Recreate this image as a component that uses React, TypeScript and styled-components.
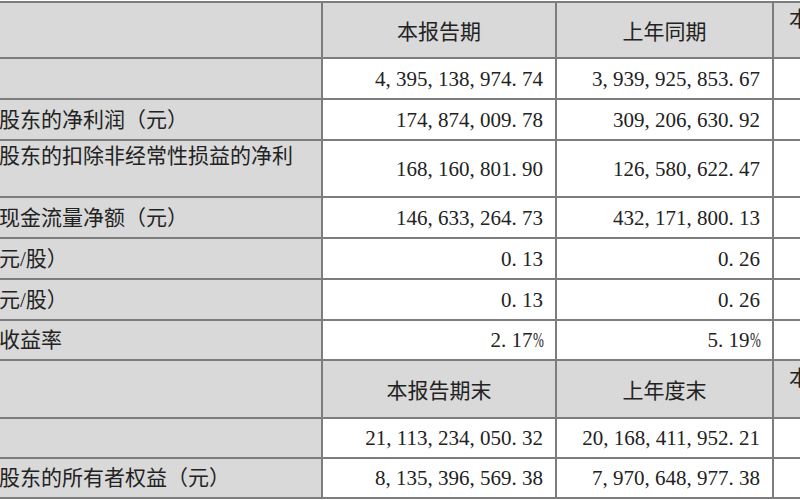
import { createGlobalStyle } from 'styled-components';
import styled from 'styled-components';

const GlobalStyle = createGlobalStyle`
  html, body {
    margin: 0;
    padding: 0;
    background: #ffffff;
    overflow: hidden;
  }
  body {
    font-family: "Liberation Serif", "Noto Sans CJK SC", serif;
    color: #222222;
  }
`;

const Page = styled.div`
  width: 800px;
  height: 500px;
  overflow: hidden;
  padding-top: 1px;
  box-sizing: border-box;
`;

const Table = styled.div<{ $rows: string }>`
  display: grid;
  grid-template-columns: 479px 232px 215px 198px;
  grid-template-rows: ${(p) => p.$rows};
  gap: 2px;
  padding: 2px 0;
  margin-left: -158px;
  width: max-content;
  background: #7d7d7d;
`;

const Cell = styled.div<{ $gray?: boolean; $align: 'left' | 'center' | 'right' }>`
  display: flex;
  align-items: center;
  justify-content: ${(p) =>
    p.$align === 'left' ? 'flex-start' : p.$align === 'right' ? 'flex-end' : 'center'};
  text-align: ${(p) => p.$align};
  background: ${(p) => (p.$gray ? '#d9d9d9' : '#ffffff')};
  font-size: 21px;
  line-height: 26px;
  overflow: hidden;
`;

const Label = styled(Cell)`
  padding: 0 22px 0 10px;
`;

const Head = styled(Cell)`
  padding: 4px 8px 0;
`;

const Num = styled(Cell)`
  padding: 0 12px 0 8px;
  white-space: nowrap;
`;

const Punct = styled.span`
  display: inline-block;
  width: 0.5em;
  text-align: left;
`;

const Percent = styled.span`
  display: inline-block;
  width: 0.5em;
  transform: scaleX(0.62);
  transform-origin: left center;
`;

type Row = {
  h: number;
  head?: boolean;
  label: string;
  cur: string;
  prev: string;
  change?: string;
};

const rows: Row[] = [
  { h: 54, head: true, label: '', cur: '本报告期', prev: '上年同期', change: '本报告期比上年同期增减' },
  { h: 39, label: '营业收入（元）', cur: '4,395,138,974.74', prev: '3,939,925,853.67' },
  { h: 39, label: '归属于上市公司股东的净利润（元）', cur: '174,874,009.78', prev: '309,206,630.92' },
  {
    h: 55,
    label: '归属于上市公司股东的扣除非经常性损益的净利润（元）',
    cur: '168,160,801.90',
    prev: '126,580,622.47',
  },
  { h: 39, label: '经营活动产生的现金流量净额（元）', cur: '146,633,264.73', prev: '432,171,800.13' },
  { h: 39, label: '基本每股收益（元/股）', cur: '0.13', prev: '0.26' },
  { h: 39, label: '稀释每股收益（元/股）', cur: '0.13', prev: '0.26' },
  { h: 38, label: '加权平均净资产收益率', cur: '2.17%', prev: '5.19%' },
  { h: 56, head: true, label: '', cur: '本报告期末', prev: '上年度末', change: '本报告期末比上年度末增减' },
  { h: 38, label: '总资产（元）', cur: '21,113,234,050.32', prev: '20,168,411,952.21' },
  {
    h: 38,
    label: '归属于上市公司股东的所有者权益（元）',
    cur: '8,135,396,569.38',
    prev: '7,970,648,977.38',
  },
];

// the report font sets commas, points and % at digit width
const Amount = ({ value }: { value: string }) => (
  <span>
    {value.split('').map((ch, i) =>
      ch === ',' || ch === '.' ? (
        <Punct key={i}>{ch}</Punct>
      ) : ch === '%' ? (
        <Percent key={i}>{ch}</Percent>
      ) : (
        ch
      )
    )}
  </span>
);

const App = () => {
  return (
    <Page>
      <GlobalStyle />
      <Table $rows={rows.map((r) => `${r.h}px`).join(' ')}>
        {rows.map((r, i) =>
          r.head ? (
            [
              <Head key={`${i}-a`} $gray $align="center">{r.label}</Head>,
              <Head key={`${i}-b`} $gray $align="center">{r.cur}</Head>,
              <Head key={`${i}-c`} $gray $align="center">{r.prev}</Head>,
              <Head key={`${i}-d`} $gray $align="center">{r.change}</Head>,
            ]
          ) : (
            [
              <Label key={`${i}-a`} $gray $align="left">{r.label}</Label>,
              <Num key={`${i}-b`} $align="right"><Amount value={r.cur} /></Num>,
              <Num key={`${i}-c`} $align="right"><Amount value={r.prev} /></Num>,
              <Num key={`${i}-d`} $align="right">{r.change}</Num>,
            ]
          )
        )}
      </Table>
    </Page>
  );
};

export default App;
